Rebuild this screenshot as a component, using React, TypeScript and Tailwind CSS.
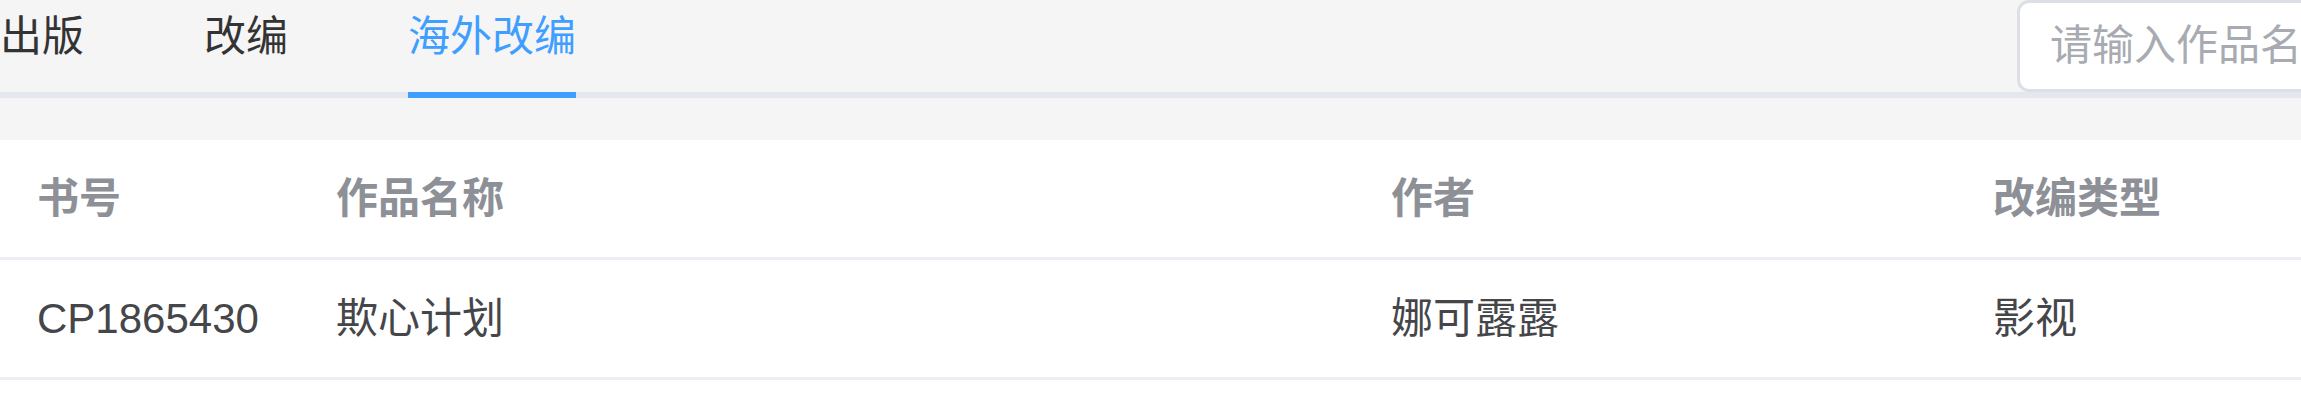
const tabs = ["出版", "改编", "海外改编"];

const columns = [
  { key: "id", title: "书号", width: "w-[299px]" },
  { key: "name", title: "作品名称", width: "w-[1055px]" },
  { key: "author", title: "作者", width: "w-[602px]" },
  { key: "type", title: "改编类型", width: "flex-1" },
];

const rows = [{ id: "CP1865430", name: "欺心计划", author: "娜可露露", type: "影视" }];

export default function App() {
  const active = 2;

  return (
    <div
      className="h-[413px] w-[2301px] overflow-hidden bg-[#f5f5f5] text-[42px]"
      style={{ fontFamily: '"Liberation Sans", "Noto Sans CJK SC", sans-serif' }}
    >
      {/* tabs + search */}
      <div className="flex h-[98px] items-start border-b-[6px] border-[#e4e7ed]">
        <div className="flex w-[2017px] shrink-0 gap-[120px]">
          {tabs.map((tab, i) => (
            <div
              key={tab}
              className={
                i === active
                  ? "-mb-[6px] h-[98px] border-b-[6px] border-[#409eff] pt-[16px] leading-[42px] text-[#409eff]"
                  : "h-[92px] pt-[16px] leading-[42px] text-[#333333]"
              }
            >
              {tab}
            </div>
          ))}
        </div>
        <input
          className="h-[92px] w-[400px] shrink-0 rounded-[12px] border-[3px] border-[#dcdfe6] bg-white pl-[30px] leading-[42px] outline-none placeholder:text-[#a8abb2]"
          placeholder="请输入作品名称"
        />
      </div>

      {/* table */}
      <div className="mt-[42px] h-[273px] bg-white">
        <div className="flex h-[120px] border-b-[3px] border-[#ebeef5]">
          {columns.map((col) => (
            <div
              key={col.key}
              className={`${col.width} flex items-center pl-[37px] font-bold text-[#8e9097]`}
            >
              {col.title}
            </div>
          ))}
        </div>
        {rows.map((row) => (
          <div key={row.id} className="flex h-[120px] border-b-[3px] border-[#ebeef5] text-[#45464a]">
            <div className="flex w-[299px] items-center pl-[37px]">{row.id}</div>
            <div className="flex w-[1055px] items-center pl-[37px]">{row.name}</div>
            <div className="flex w-[602px] items-center pl-[37px]">{row.author}</div>
            <div className="flex flex-1 items-center pl-[37px]">{row.type}</div>
          </div>
        ))}
      </div>
    </div>
  );
}
